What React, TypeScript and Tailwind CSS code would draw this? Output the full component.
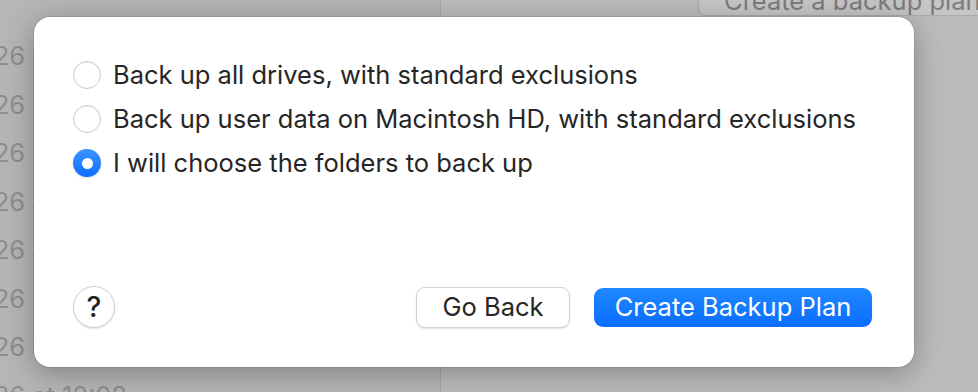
import React from "react";

const font = { fontFamily: "Inter, 'Noto Sans', sans-serif" };

function Radio({ checked }: { checked?: boolean }) {
  if (checked) {
    return (
      <div className="w-[28px] h-[28px] rounded-full bg-gradient-to-b from-[#3b94ff] to-[#0a6cff] flex items-center justify-center shrink-0 shadow-[0_1px_2px_rgba(0,0,0,0.15)]">
        <div className="w-[11px] h-[11px] rounded-full bg-white" />
      </div>
    );
  }
  return (
    <div className="w-[28px] h-[28px] rounded-full bg-white border border-[#c9c9c9] shrink-0 shadow-[inset_0_1px_1px_rgba(0,0,0,0.04)]" />
  );
}

export default function App() {
  const rows = [0, 1, 2, 3, 4, 5, 6, 7];
  return (
    <div className="relative w-[978px] h-[392px] overflow-hidden bg-[#bababa]" style={font}>
      {/* background app */}
      <div className="flex h-full">
        <div className="w-[441px] h-full bg-[#b6b6b6] border-r border-[#a9a9a9] pt-[40px] overflow-hidden">
          {rows.map((i) => (
            <div key={i} className="h-[48.5px] ml-[-38px] text-[25.5px] leading-[32px] text-[#8e8e8e] whitespace-nowrap">
              2026 at 12:08
            </div>
          ))}
        </div>
        <div className="flex-1 h-full bg-[#bcbcbc] flex justify-end">
          <div className="mt-[-16px] h-[32px] ml-auto w-[290px] mr-[-10px] rounded-[8px] bg-[#c6c6c6] border border-[#ababab] text-[25.5px] leading-[32px] text-[#7c7c7c] pl-[25px] whitespace-nowrap">
            Create a backup plan
          </div>
        </div>
      </div>
      {/* dialog */}
      <div className="absolute left-[34px] top-[17px] w-[880px] h-[350px] rounded-[16px] bg-white shadow-[0_0_0_1px_rgba(0,0,0,0.08),0_6px_30px_rgba(0,0,0,0.3)] flex flex-col px-[39px] pt-[44px] pb-[39px]">
        <div className="flex flex-col gap-[16px] text-[25.5px] leading-[28px] text-[#262626]">
          <div className="flex items-center gap-[12px]">
            <Radio />
            <span>Back up all drives, with standard exclusions</span>
          </div>
          <div className="flex items-center gap-[12px]">
            <Radio />
            <span>Back up user data on Macintosh HD, with standard exclusions</span>
          </div>
          <div className="flex items-center gap-[12px]">
            <Radio checked />
            <span>I will choose the folders to back up</span>
          </div>
        </div>
        <div className="mt-auto flex items-center">
          <div className="w-[42px] h-[42px] rounded-full bg-white border border-[#d0d0d0] shadow-[0_1px_2px_rgba(0,0,0,0.12)] flex items-center justify-center text-[28px] font-medium text-[#222]">
            ?
          </div>
          <div className="ml-auto flex items-center gap-[24px] mr-[3px]">
            <div className="w-[154px] h-[41px] rounded-[9px] bg-white border border-[#d2d2d2] shadow-[0_1px_2px_rgba(0,0,0,0.12)] flex items-center justify-center text-[25.5px] text-[#262626]">
              Go Back
            </div>
            <div className="w-[278px] h-[39px] rounded-[9px] bg-gradient-to-b from-[#1f87ff] to-[#0a6dff] flex items-center justify-center text-[25.5px] text-white">
              Create Backup Plan
            </div>
          </div>
        </div>
      </div>
    </div>
  );
}
